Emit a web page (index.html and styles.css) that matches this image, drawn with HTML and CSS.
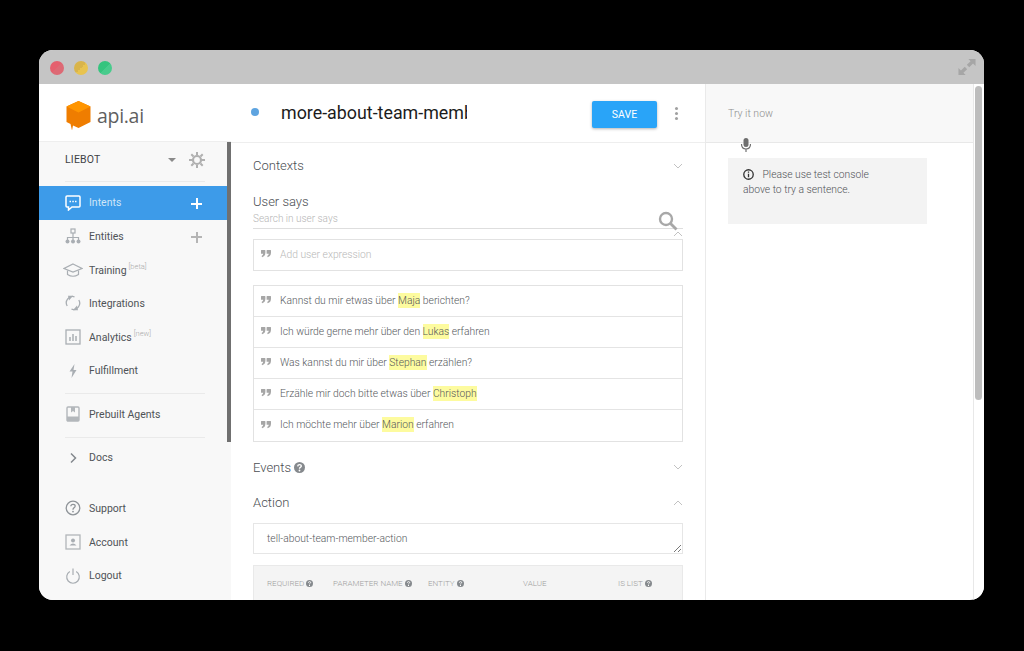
FILE: index.html
```html
<!DOCTYPE html>
<html lang="en">
<head>
    <meta charset="UTF-8">
    <title>api.ai</title>
    <link rel="stylesheet" href="styles.css">
</head>
<body>
    <svg class="defs" width="0" height="0"><defs>
        <g id="q"><circle cx="6" cy="6" r="6" fill="#85898d"/><path d="M4 4.700Q4.200 2.800 6 2.800Q8 2.800 8 4.400Q8 5.200 6.900 5.800Q6 6.200 6 7.400" fill="none" stroke="#fff" stroke-width="1.500"/><circle cx="6" cy="9.300" r="1" fill="#fff"/></g>
        <g id="quote-mark"><path d="M2.400 0H.4Q0 0 0 .5V3.400Q0 3.800 .4 3.800H2.200Q2.200 5.200 .6 5.900L1.100 7.300Q4.400 6.300 4.400 2.800V.5Q4.400 0 3.900 0Z" fill="#a6a6a6"/><path d="M8 0H6Q5.600 0 5.600 .5V3.400Q5.600 3.800 6 3.800H7.800Q7.800 5.200 6.200 5.900L6.700 7.300Q10 6.300 10 2.800V.5Q10 0 9.500 0Z" fill="#a6a6a6"/></g>
    </defs></svg>
    <div class="window">
        <div class="titlebar">
            <span class="light light-red"></span>
            <span class="light light-yellow"></span>
            <span class="light light-green"></span>
            <svg class="expand" width="18" height="18" viewBox="0 0 20 20"><path d="M11.500 1H19.500V9L16.700 6.200L12.500 10.300L9.800 7.600L14 3.500Z" fill="#a6a6a6"/><path d="M8.500 19H.5V11L3.300 13.800L7.500 9.700L10.200 12.400L6 16.500Z" fill="#a6a6a6"/></svg>
        </div>
        <div class="app">
            <div class="sidebar">
                <div class="logo">
                    <svg width="25" height="31" viewBox="0 0 25 31"><path d="M12.500 1L24.500 6.500V22L12.500 28L7 25.500L6 30.500L4.500 24L.5 22V6.500Z" fill="#ef7d00"/><path d="M12.500 1L24.500 6.500L12.500 12.500L.5 6.500Z" fill="#ff9500"/></svg>
                    <span class="logo-text">api.ai</span>
                </div>
                <div class="sidebar-thumb"></div>
                <div class="agent">
                    <span class="agent-name">LIEBOT</span>
                    <span class="caret"></span>
                    <svg width="16" height="16" viewBox="0 0 16 16"><circle cx="8" cy="8" r="4" fill="none" stroke="#b0b0b0" stroke-width="2.200"/><path d="M8 0V3M8 13V16M0 8H3M13 8H16M2.300 2.300L4.500 4.500M11.500 11.500L13.700 13.700M13.700 2.300L11.500 4.500M4.500 11.500L2.300 13.700" stroke="#b0b0b0" stroke-width="2"/></svg>
                </div>
                <div class="divider divider-top"></div>
                <div class="nav-item active">
                    <svg class="nav-icon" width="16" height="16" viewBox="0 0 16 16"><path d="M2 1H14Q15 1 15 2V11Q15 12 14 12H7L3.500 15V12H2Q1 12 1 11V2Q1 1 2 1Z" fill="none" stroke="#fff" stroke-width="1.500"/><path d="M4.500 6.500H6M7.300 6.500H8.800M10 6.500H11.500" stroke="#fff" stroke-width="1.500"/></svg>
                    <span class="nav-label">Intents</span>
                    <span class="plus"></span>
                </div>
                <div class="nav-item">
                    <svg class="nav-icon" width="16" height="16" viewBox="0 0 16 16"><path d="M8 5V9M2.500 13V9.500H13.500V13M8 9V13" fill="none" stroke="#a9aeb3" stroke-width="1.200"/><rect x="6" y="1" width="4" height="4" fill="none" stroke="#a9aeb3" stroke-width="1.200"/><circle cx="2.500" cy="13.500" r="2" fill="#a9aeb3"/><circle cx="8" cy="13.500" r="2" fill="#a9aeb3"/><circle cx="13.500" cy="13.500" r="2" fill="#a9aeb3"/></svg>
                    <span class="nav-label">Entities</span>
                    <span class="plus"></span>
                </div>
                <div class="nav-item nav-training">
                    <svg class="nav-icon nav-icon-wide" width="20" height="16" viewBox="0 0 20 16"><path d="M10 2L19 6.500L10 10L1 6.500Z" fill="none" stroke="#a9aeb3" stroke-width="1.200"/><path d="M4.500 8.500V12.500Q10 16 15.500 12.500V8.500" fill="none" stroke="#a9aeb3" stroke-width="1.200"/></svg>
                    <span class="nav-label">Training<sup>[beta]</sup></span>
                </div>
                <div class="nav-item">
                    <svg class="nav-icon" width="16" height="16" viewBox="0 0 16 16"><path d="M2.200 11A6.300 6.300 0 0 1 9.500 1.800M13.800 5A6.300 6.300 0 0 1 6.500 14.200" fill="none" stroke="#a9aeb3" stroke-width="1.300"/><path d="M3 .8H8L4 5.500ZM13 15.200H8L12 10.500Z" fill="#a9aeb3"/></svg>
                    <span class="nav-label">Integrations</span>
                </div>
                <div class="nav-item">
                    <svg class="nav-icon" width="16" height="16" viewBox="0 0 16 16"><rect x="1" y="1" width="14" height="14" fill="none" stroke="#a9aeb3" stroke-width="1.300"/><path d="M5 12V8M8 12V5M11 12V7" stroke="#a9aeb3" stroke-width="1.500"/></svg>
                    <span class="nav-label">Analytics<sup>[new]</sup></span>
                </div>
                <div class="nav-item">
                    <svg class="nav-icon" width="16" height="16" viewBox="0 0 16 16"><path d="M9.500 1L4.500 8.500H7.500L6.500 15L11.500 7H8.500Z" fill="#a9aeb3"/></svg>
                    <span class="nav-label">Fulfillment</span>
                </div>
                <div class="divider divider-mid"></div>
                <div class="nav-item">
                    <svg class="nav-icon" width="16" height="16" viewBox="0 0 16 16"><rect x="2" y="1" width="12" height="14" rx="1" fill="none" stroke="#b3b7bb" stroke-width="1.400"/><path d="M2 10.500H14V15H2ZM6 1H10V6.500L8 5L6 6.500Z" fill="#b3b7bb"/></svg>
                    <span class="nav-label">Prebuilt Agents</span>
                </div>
                <div class="divider divider-mid"></div>
                <div class="nav-item">
                    <svg class="nav-icon" width="16" height="16" viewBox="0 0 16 16"><path d="M6 3.500L10.500 8L6 12.500" fill="none" stroke="#83888d" stroke-width="1.500"/></svg>
                    <span class="nav-label">Docs</span>
                </div>
                <div class="nav-bottom">
                    <div class="nav-item">
                        <svg class="nav-icon" width="16" height="16" viewBox="0 0 16 16"><circle cx="8" cy="8" r="6.800" fill="none" stroke="#8f9499" stroke-width="1.300"/><path d="M5.800 6.300Q6 4.300 8 4.300Q10.200 4.300 10.200 6.100Q10.200 7.200 8.900 7.900Q8 8.400 8 9.800" fill="none" stroke="#8f9499" stroke-width="1.300"/><circle cx="8" cy="11.600" r=".9" fill="#8f9499"/></svg>
                        <span class="nav-label">Support</span>
                    </div>
                    <div class="nav-item">
                        <svg class="nav-icon" width="16" height="16" viewBox="0 0 16 16"><rect x="1" y="1" width="14" height="14" fill="none" stroke="#b1b5b9" stroke-width="1.300"/><circle cx="8" cy="6.500" r="2" fill="#a9aeb3"/><path d="M4.500 11.500Q8 7.500 11.500 11.500Z" fill="#a9aeb3"/></svg>
                        <span class="nav-label">Account</span>
                    </div>
                    <div class="nav-item">
                        <svg class="nav-icon" width="16" height="16" viewBox="0 0 16 16"><path d="M4.800 3.500A6.300 6.300 0 1 0 11.200 3.500" fill="none" stroke="#a9aeb3" stroke-width="1.200"/><path d="M8 .5V7" stroke="#a9aeb3" stroke-width="1.200"/></svg>
                        <span class="nav-label">Logout</span>
                    </div>
                </div>
            </div>

            <div class="main">
                <div class="main-header">
                    <span class="status-dot"></span>
                    <div class="intent-name">more-about-team-member</div>
                    <button class="save-btn">SAVE</button>
                    <div class="kebab"><span></span><span></span><span></span></div>
                </div>
                <div class="main-body">
                    <div class="section-row section-contexts">
                        <span class="section-title">Contexts</span>
                        <svg class="chevron" width="10" height="6" viewBox="0 0 10 6"><path d="M1 1L5 5L9 1" fill="none" stroke="#c2c2c2"/></svg>
                    </div>
                    <div class="section-title section-user">User says</div>
                    <div class="search-row">
                        Search in user says
                        <svg class="search-icon" width="20" height="20" viewBox="0 0 20 20"><circle cx="8" cy="8" r="6" fill="none" stroke="#a8a8a8" stroke-width="2.400"/><path d="M12.500 12.500L18.500 18.500" stroke="#a8a8a8" stroke-width="2.800"/></svg>
                        <svg class="chevron chevron-search" width="10" height="6" viewBox="0 0 10 6"><path d="M1 5L5 1L9 5" fill="none" stroke="#c2c2c2"/></svg>
                    </div>
                    <div class="phrase phrase-add"><svg class="quote" width="10" height="8" viewBox="0 0 10 8"><use href="#quote-mark"/></svg><span class="placeholder">Add user expression</span></div>
                    <div class="phrase-list">
                        <div class="phrase"><svg class="quote" width="10" height="8" viewBox="0 0 10 8"><use href="#quote-mark"/></svg><span>Kannst du mir etwas über <mark>Maja</mark> berichten?</span></div>
                        <div class="phrase"><svg class="quote" width="10" height="8" viewBox="0 0 10 8"><use href="#quote-mark"/></svg><span>Ich würde gerne mehr über den <mark>Lukas</mark> erfahren</span></div>
                        <div class="phrase"><svg class="quote" width="10" height="8" viewBox="0 0 10 8"><use href="#quote-mark"/></svg><span>Was kannst du mir über <mark>Stephan</mark> erzählen?</span></div>
                        <div class="phrase"><svg class="quote" width="10" height="8" viewBox="0 0 10 8"><use href="#quote-mark"/></svg><span>Erzähle mir doch bitte etwas über <mark>Christoph</mark></span></div>
                        <div class="phrase"><svg class="quote" width="10" height="8" viewBox="0 0 10 8"><use href="#quote-mark"/></svg><span>Ich möchte mehr über <mark>Marion</mark> erfahren</span></div>
                    </div>
                    <div class="section-row section-events">
                        <span class="section-title">Events
                            <svg class="help" width="11" height="11" viewBox="0 0 12 12"><use href="#q"/></svg>
                        </span>
                        <svg class="chevron" width="10" height="6" viewBox="0 0 10 6"><path d="M1 1L5 5L9 1" fill="none" stroke="#c2c2c2"/></svg>
                    </div>
                    <div class="section-row section-action">
                        <span class="section-title">Action</span>
                        <svg class="chevron" width="10" height="6" viewBox="0 0 10 6"><path d="M1 5L5 1L9 5" fill="none" stroke="#c2c2c2"/></svg>
                    </div>
                    <div class="action-input">
                        tell-about-team-member-action
                        <svg class="resize-grip" width="7" height="7" viewBox="0 0 7 7"><path d="M0 7L7 0M4 7L7 4" stroke="#777"/></svg>
                    </div>
                    <div class="param-head">
                        <span>REQUIRED <svg class="help" width="7" height="7" viewBox="0 0 12 12"><use href="#q"/></svg></span>
                        <span>PARAMETER NAME <svg class="help" width="7" height="7" viewBox="0 0 12 12"><use href="#q"/></svg></span>
                        <span>ENTITY <svg class="help" width="7" height="7" viewBox="0 0 12 12"><use href="#q"/></svg></span>
                        <span>VALUE</span>
                        <span>IS LIST <svg class="help" width="7" height="7" viewBox="0 0 12 12"><use href="#q"/></svg></span>
                    </div>
                </div>
            </div>

            <div class="console">
                <div class="console-col">
                    <div class="console-head">Try it now</div>
                    <svg class="mic" width="12" height="16" viewBox="0 0 12 16"><rect x="3.500" y="1" width="5" height="9" rx="2.500" fill="#6e6e6e"/><path d="M1.500 7Q1.500 12 6 12Q10.500 12 10.500 7M6 12V15" fill="none" stroke="#6e6e6e" stroke-width="1.200"/></svg>
                    <div class="console-msg">
                        <svg class="info" width="11" height="11" viewBox="0 0 10 10"><circle cx="5" cy="5" r="4.300" fill="none" stroke="#333" stroke-width="1.200"/><path d="M5 4.300V7.600M5 2.200V3.400" stroke="#333" stroke-width="1.200"/></svg>
                        Please use test console above to try a sentence.
                    </div>
                </div>
                <div class="console-scroll"><div class="console-thumb"></div></div>
            </div>
        </div>
    </div>
</body>
</html>
```
FILE: styles.css
```css
:root {
    --text: #55595d;
    --line: #e6e6e6;
    --blue: #3d9be9;
}

html, body {
    height: 100%;
}

body {
    margin: 0;
    background-color: #000;
    font-family: Roboto, 'Liberation Sans', sans-serif;
    color: var(--text);
    overflow: hidden;
}

.defs {
    display: block;
}

.window {
    width: 945px;
    height: 550px;
    margin: 50px 0 0 39px;
    border-radius: 14px;
    overflow: hidden;
    background-color: #fff;
    display: flex;
    flex-direction: column;
}

.titlebar {
    height: 34px;
    flex: none;
    background-color: #c5c5c5;
    display: flex;
    align-items: center;
    padding: 2px 8px 0 11px;
    box-sizing: border-box;
    gap: 10px;
}

.light {
    width: 14px;
    height: 14px;
    border-radius: 50%;
}

.light-red {
    background: linear-gradient(135deg, #e5606e 50%, #dd6a75 50%);
}

.light-yellow {
    background: linear-gradient(135deg, #d9b44a 50%, #e8c34f 50%);
}

.light-green {
    background: linear-gradient(135deg, #35c47e 50%, #48cb8c 50%);
}

.expand {
    margin-left: auto;
    margin-top: -2px;
}

.app {
    flex: 1;
    display: flex;
    min-height: 0;
}

/* sidebar */
.sidebar {
    width: 192px;
    flex: none;
    background-color: #f8f8f8;
    position: relative;
    box-sizing: border-box;
    overflow: hidden;
}

.sidebar-thumb {
    position: absolute;
    right: 0;
    top: 58px;
    width: 4px;
    height: 300px;
    background-color: #707070;
}

.logo {
    height: 58px;
    box-sizing: border-box;
    background-color: #fff;
    border-bottom: 1px solid #eee;
    padding: 6px 0 0 27px;
    display: flex;
    align-items: center;
    gap: 6px;
}

.logo-text {
    font-family: 'Open Sans', sans-serif;
    font-size: 19.500px;
    color: #5f5f5f;
    letter-spacing: -.3px;
}

.agent {
    height: 39px;
    display: flex;
    align-items: center;
    padding: 0 26px 4px 26px;
    box-sizing: border-box;
    font-size: 10.500px;
    color: #3f4246;
    letter-spacing: .2px;
}

.agent-name {
    flex: 1;
}

.caret {
    width: 0;
    height: 0;
    border-left: 4px solid transparent;
    border-right: 4px solid transparent;
    border-top: 4px solid #8a8a8a;
    margin-right: 13px;
}

.divider {
    height: 1px;
    margin: 0 26px;
    background-color: #eaeaea;
}

.divider-top {
    margin-bottom: 4px;
}

.divider-mid {
    margin-top: 5px;
    margin-bottom: 4px;
}

.nav-item {
    height: 33.600px;
    display: flex;
    align-items: center;
    padding: 0 0 1px 26px;
    font-size: 10.500px;
    color: #4f5357;
    position: relative;
    box-sizing: border-box;
}

.nav-item.active {
    background-color: var(--blue);
    color: #cfe6f8;
    margin-right: 4px;
    height: 34px;
}

.nav-training {
    padding-bottom: 0;
}

.nav-icon {
    flex: none;
    margin-right: 8px;
}

.nav-icon-wide {
    margin: 0 6px 0 -2px;
}

sup {
    font-size: 7.500px;
    font-weight: 300;
    color: #a9a9a9;
    margin-left: 2px;
    line-height: 0;
}

.plus {
    position: absolute;
    left: 152px;
    top: 50%;
    width: 11px;
    height: 11px;
    margin-top: -5px;
    background:
        linear-gradient(#b5b5b5, #b5b5b5) center / 11px 2px no-repeat,
        linear-gradient(#b5b5b5, #b5b5b5) center / 2px 11px no-repeat;
}

.active .plus {
    background:
        linear-gradient(#fff, #fff) center / 11px 2px no-repeat,
        linear-gradient(#fff, #fff) center / 2px 11px no-repeat;
}

.nav-bottom {
    margin-top: 17px;
}

/* main column */
.main {
    width: 475px;
    flex: none;
    box-sizing: border-box;
    border-right: 1px solid #eaeaea;
    overflow: hidden;
    display: flex;
    flex-direction: column;
}

.main-header {
    height: 59px;
    flex: none;
    box-sizing: border-box;
    border-bottom: 1px solid #eee;
    padding: 0 0 0 20px;
    display: flex;
    align-items: center;
}

.status-dot {
    width: 8px;
    height: 8px;
    border-radius: 50%;
    background-color: #5ea4e0;
    flex: none;
    margin-top: -2px;
}

.intent-name {
    width: 186px;
    margin: -2px 0 0 22px;
    font-size: 17.850px;
    color: #1c1c1c;
    white-space: nowrap;
    overflow: hidden;
}

.save-btn {
    width: 65px;
    height: 27px;
    margin: 2px 0 0 125px;
    border: none;
    border-radius: 2px;
    background-color: #29a4f8;
    color: #fff;
    font-family: Roboto, sans-serif;
    font-size: 10.500px;
    box-shadow: 0 1px 3px rgba(0,0,0,.3);
}

.kebab {
    margin-left: 18px;
    display: flex;
    flex-direction: column;
    gap: 2px;
}

.kebab span {
    width: 3px;
    height: 3px;
    border-radius: 50%;
    background-color: #a0a0a0;
}

.main-body {
    padding: 0 22px;
    flex: 1;
}

.section-row {
    display: flex;
    justify-content: space-between;
    align-items: center;
}

.section-contexts {
    height: 45px;
}

.section-title {
    font-size: 13px;
    font-weight: 300;
    color: #4a4e52;
}

.section-user {
    height: 18px;
    line-height: 18px;
    margin-top: 5px;
}

.search-row {
    position: relative;
    height: 18px;
    line-height: 16px;
    font-size: 10px;
    font-weight: 300;
    color: #b5b5b5;
    border-bottom: 1px solid #dedede;
    box-sizing: border-box;
    margin-bottom: 10px;
}

.search-icon {
    position: absolute;
    right: 5px;
    top: 0;
}

.chevron {
    flex: none;
}

.chevron-search {
    position: absolute;
    right: 0;
    top: 20px;
}

.phrase {
    height: 31px;
    display: flex;
    align-items: center;
    padding: 0 0 2px 7px;
    font-size: 10.300px;
    font-weight: 300;
    color: #55585c;
    box-sizing: border-box;
    border-bottom: 1px solid #e4e4e4;
}

.phrase:last-child {
    border-bottom: none;
}

.phrase-add {
    height: 32px;
    border: 1px solid #e2e2e2;
    margin-bottom: 14px;
}

.phrase-list {
    border: 1px solid #e2e2e2;
}

.quote {
    flex: none;
    margin-right: 9px;
}

.placeholder {
    color: #b8b8b8;
}

mark {
    background-color: #fdfb9f;
    color: inherit;
    padding: 1px 0;
}

.section-events {
    height: 36px;
    margin-top: 7px;
}

.section-action {
    height: 35px;
    margin-bottom: 3px;
}

.help {
    vertical-align: -1px;
}

.action-input {
    position: relative;
    height: 31px;
    line-height: 29px;
    padding-left: 13px;
    font-size: 10.300px;
    font-weight: 300;
    color: #55585c;
    border: 1px solid #e6e6e6;
    box-sizing: border-box;
    margin-bottom: 11px;
}

.resize-grip {
    position: absolute;
    right: 1px;
    bottom: 1px;
}

.param-head {
    height: 40px;
    background-color: #f4f4f4;
    border: 1px solid #e9e9e9;
    box-sizing: border-box;
    display: grid;
    grid-template-columns: 66px 95px 95px 95px 1fr;
    align-items: start;
    padding: 13px 0 0 13px;
    font-size: 8px;
    font-weight: 300;
    color: #a0a0a0;
}

/* test console */
.console {
    flex: 1;
    display: flex;
    min-width: 0;
    position: relative;
}

.console-col {
    flex: 1;
    position: relative;
    border-right: 1px solid #e8e8e8;
}

.console-head {
    height: 59px;
    box-sizing: border-box;
    background-color: #f8f8f8;
    border-bottom: 1px solid #e8e8e8;
    padding: 23px 0 0 22px;
    font-size: 10.500px;
    font-weight: 300;
    line-height: 14px;
    color: #8f8f8f;
}

.mic {
    position: absolute;
    left: 34px;
    top: 53px;
}

.console-msg {
    width: 199px;
    height: 66px;
    margin: 15px 0 0 22px;
    padding: 9px 30px 0 15px;
    box-sizing: border-box;
    background-color: #f3f3f3;
    font-size: 10.300px;
    font-weight: 300;
    line-height: 15px;
    color: #4f5256;
}

.info {
    margin-right: 6px;
    vertical-align: -2px;
}

.console-scroll {
    width: 10px;
    flex: none;
    background-color: #fff;
    padding: 2px 2px 0 1px;
    box-sizing: border-box;
}

.console-thumb {
    height: 314px;
    border-radius: 4px;
    background-color: #bdbdbd;
}
```
